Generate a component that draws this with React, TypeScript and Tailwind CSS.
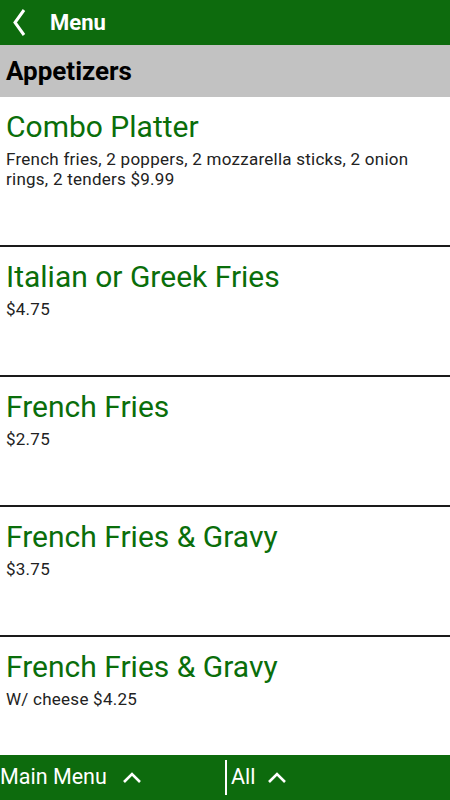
const items = [
  {
    id: 1,
    name: "Combo Platter",
    desc: "French fries, 2 poppers, 2 mozzarella sticks, 2 onion rings, 2 tenders $9.99",
  },
  { id: 2, name: "Italian or Greek Fries", desc: "$4.75" },
  { id: 3, name: "French Fries", desc: "$2.75" },
  { id: 4, name: "French Fries & Gravy", desc: "$3.75" },
  { id: 5, name: "French Fries & Gravy", desc: "W/ cheese $4.25" },
];

function ChevronUp() {
  return (
    <svg width="20" height="14" viewBox="0 0 20 14" fill="none">
      <path d="M2 11 L10 3 L18 11" stroke="white" strokeWidth="2.6" />
    </svg>
  );
}

export default function App() {
  return (
    <div className="flex h-[800px] w-[450px] flex-col overflow-hidden bg-white font-['Roboto',sans-serif]">
      <header className="flex h-[45px] shrink-0 items-center bg-[#0d6b0d] text-white">
        <svg width="50" height="45" viewBox="0 0 50 45" fill="none">
          <path d="M24 10 L15 22.5 L24 35" stroke="white" strokeWidth="3" />
        </svg>
        <h1 className="text-[22px] font-bold">Menu</h1>
      </header>

      <div className="flex h-[52px] shrink-0 items-center bg-[#c2c2c2] px-[6px]">
        <h2 className="text-[26px] font-bold text-black">Appetizers</h2>
      </div>

      <div className="flex-1 overflow-hidden">
        {items.map((item, i) => (
          <div
            key={item.id}
            className={`border-b-2 border-[#1a1a1a] px-[6px] pt-[11px] ${i === 0 ? "h-[150px]" : "h-[130px]"}`}
          >
            <h3 className="text-[30px] leading-[38px] text-[#0a6e0a]">{item.name}</h3>
            <p className="mt-[3px] text-[17px] leading-[20px] tracking-[0.25px] text-[#222]">{item.desc}</p>
          </div>
        ))}
      </div>

      <footer className="flex h-[45px] shrink-0 items-center bg-[#0d6b0d] text-white">
        <div className="flex w-[225px] items-center gap-[15px] text-[21.5px]">
          <span>Main Menu</span>
          <ChevronUp />
        </div>
        <div className="h-[35px] w-[2px] bg-white" />
        <div className="flex items-center gap-[12px] pl-[4px] text-[21.5px]">
          <span>All</span>
          <ChevronUp />
        </div>
      </footer>
    </div>
  );
}
